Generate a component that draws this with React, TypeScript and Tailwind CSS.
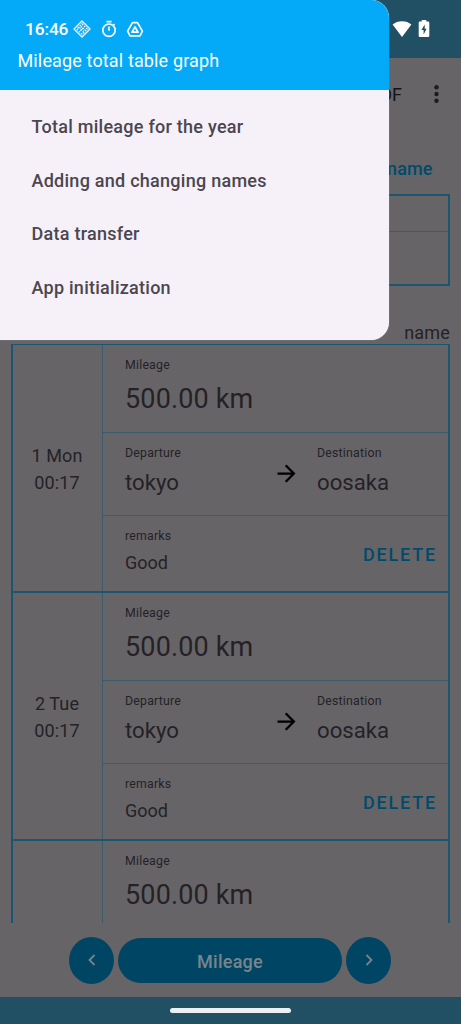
const menuItems = [
  "Total mileage for the year",
  "Adding and changing names",
  "Data transfer",
  "App initialization",
]

type MileageRecord = {
  id: number
  day?: string
  time?: string
  km: string
  trip?: { from: string; to: string; remarks: string }
}

const records: MileageRecord[] = [
  { id: 1, day: "1 Mon", time: "00:17", km: "500.00 km", trip: { from: "tokyo", to: "oosaka", remarks: "Good" } },
  { id: 2, day: "2 Tue", time: "00:17", km: "500.00 km", trip: { from: "tokyo", to: "oosaka", remarks: "Good" } },
  { id: 3, km: "500.00 km" },
]

function ArrowIcon() {
  return (
    <svg viewBox="0 0 24 24" className="size-[27px]" fill="#000">
      <path d="M12 4l-1.41 1.41L16.17 11H4v2h12.17l-5.58 5.59L12 20l8-8z" />
    </svg>
  )
}

function Field({ label, children }: { label: string; children: React.ReactNode }) {
  return (
    <div className="flex flex-col">
      <span className="text-[12.3px] leading-4 tracking-[0.22px]">{label}</span>
      {children}
    </div>
  )
}

function TripRows({ trip }: { trip: NonNullable<MileageRecord["trip"]> }) {
  return (
    <>
      <div className="flex h-[83px] border-b border-[#3a5c6b] pt-[12px] pl-[22px]">
        <div className="w-[148px]">
          <Field label="Departure">
            <span className="mt-[7px] text-[22.2px] leading-7">{trip.from}</span>
          </Field>
        </div>
        <div className="w-[44px] pt-[15px]">
          <ArrowIcon />
        </div>
        <Field label="Destination">
          <span className="mt-[7px] text-[22.2px] leading-7">{trip.to}</span>
        </Field>
      </div>
      <div className="flex h-[75px] justify-between pt-[12px] pr-[11px] pl-[22px]">
        <Field label="remarks">
          <span className="mt-[7px] text-[18px] leading-6">{trip.remarks}</span>
        </Field>
        <button className="h-[52px] text-[18px] font-medium tracking-[1.8px] text-[#004b6b]">DELETE</button>
      </div>
    </>
  )
}

function RecordCard({ record }: { record: MileageRecord }) {
  return (
    <div className="flex shrink-0 border-b-2 border-[#1c5570] text-[#242226]">
      <div className="flex w-[90px] flex-col items-center justify-center border-r border-[#3a5c6b] pt-px pr-px text-[18px] leading-[27px] tracking-[0.1px]">
        <span>{record.day}</span>
        <span>{record.time}</span>
      </div>
      <div className="flex flex-1 flex-col">
        <div className="h-[88px] border-b border-[#3a5c6b] pt-[12px] pl-[22px]">
          <Field label="Mileage">
            <span className="mt-[10px] text-[27px] leading-8 tracking-[0.15px]">{record.km}</span>
          </Field>
        </div>
        {record.trip && <TripRows trip={record.trip} />}
      </div>
    </div>
  )
}

function PatternIcon() {
  return (
    <svg viewBox="0 0 18 18" className="size-[18px]" fill="none" stroke="#fff">
      <path d="M9 1l8 8-8 8-8-8z" strokeWidth="1.2" strokeLinejoin="round" />
      <path d="M9 3.8l5.2 5.2L9 14.2 3.8 9z" strokeWidth="1.3" strokeDasharray="1.7 1.2" />
      <path d="M6.4 7.4l4.2 4.2M7.4 10.6l3.4-3.4M8 6.2l3.8 3.8" strokeWidth="1.2" strokeDasharray="1.5 .9" />
    </svg>
  )
}

function TimerIcon() {
  return (
    <svg viewBox="0 0 18 18" className="size-[18px]" fill="none" stroke="#fff" strokeWidth="1.6">
      <circle cx="9" cy="10.2" r="6.2" />
      <path d="M6.5 1.6h5M9 6.4v4.4M13.3 5.4l1.3-1.3" />
    </svg>
  )
}

function TriangleIcon() {
  return (
    <svg viewBox="0 0 18 18" className="size-[18px]" fill="none" stroke="#fff" strokeLinejoin="round">
      <path d="M6.5 2.6h5l4.9 8.5-2.4 4.7H4l-2.4-4.7z" strokeWidth="1.7" />
      <path d="M9 7l3 5.2H6z" strokeWidth="1.7" />
    </svg>
  )
}

function StatusIcons() {
  return (
    <div className="absolute top-[19px] right-[31px] flex items-center gap-[6px]">
      <svg viewBox="0 0 20 17" className="h-[17px] w-5" fill="#fff">
        <path d="M10 17L.6 4.5C3.1 2.4 6.3 1.2 10 1.2s6.9 1.2 9.4 3.3z" />
      </svg>
      <svg viewBox="0 0 12 19" className="h-[19px] w-3" fill="#fff">
        <path d="M3.7 1h4.6v1.6H10c.8 0 1.3.5 1.3 1.3v12.8c0 .8-.5 1.3-1.3 1.3H2c-.8 0-1.3-.5-1.3-1.3V3.9c0-.8.5-1.3 1.3-1.3h1.7z" />
        <path d="M6.7 5.4L3.4 11h2.2v4.4l3-5.6H6.7z" fill="#214f63" />
      </svg>
    </div>
  )
}

function Drawer() {
  return (
    <aside className="absolute top-0 left-0 h-[340px] w-[389px] overflow-hidden rounded-r-[18px] bg-[#f6f1f9] shadow-[0_0_1px_#c8c4ca]">
      <div className="h-[89.5px] bg-[#04a9f7] pt-[19px] text-white">
        <div className="flex h-5 items-center pl-[25px]">
          <span className="w-12 pt-px text-[17.3px] font-medium tracking-[-0.1px]">16:46</span>
          <div className="flex gap-[8.5px]">
            <PatternIcon />
            <TimerIcon />
            <TriangleIcon />
          </div>
        </div>
        <h1 className="mt-[9.5px] pl-[17.5px] text-[18px] leading-6 tracking-[0.14px]">Mileage total table graph</h1>
      </div>
      <nav className="flex flex-col pt-[10px] pl-[31.5px]">
        {menuItems.map((item) => (
          <a key={item} className="flex h-[53.7px] items-center text-[18px] font-medium tracking-[0.26px] text-[#4b464f]">
            {item}
          </a>
        ))}
      </nav>
    </aside>
  )
}

export default function App() {
  return (
    <div className="relative flex h-[1024px] w-[461px] flex-col overflow-hidden bg-[#676467] font-['Roboto',sans-serif]">
      <div className="h-[58px] shrink-0 bg-[#214f63]" />
      <header className="flex h-[72px] shrink-0 items-center justify-end gap-[32px] pr-[22px] text-[18px] text-[#151316]">
        <span>PDF</span>
        <svg viewBox="0 0 5 18" className="h-[18px] w-[5px]" fill="#1d1b1e">
          <circle cx="2.5" cy="2.3" r="2.2" />
          <circle cx="2.5" cy="9" r="2.2" />
          <circle cx="2.5" cy="15.7" r="2.2" />
        </svg>
      </header>

      <div className="flex h-[64px] shrink-0 items-center justify-end pt-3 pr-[28.5px] text-[18px] font-medium tracking-[0.1px] text-[#004b6b]">
        name
      </div>
      <div className="mr-[11px] ml-[11px] flex h-[92px] shrink-0 flex-col border-2 border-[#1c5570]">
        <div className="h-[36px] border-b border-[#3a5c6b]" />
      </div>
      <div className="flex h-[58px] shrink-0 items-end justify-end pr-[11px] text-[18px] leading-[22px] tracking-[0.2px] text-[#242226]">
        name
      </div>

      <main className="mr-[11px] ml-[11px] flex h-[579px] shrink-0 flex-col overflow-hidden border-x-2 border-t border-[#1c5570]">
        {records.map((record) => (
          <RecordCard key={record.id} record={record} />
        ))}
      </main>

      <footer className="flex h-[74px] shrink-0 items-center justify-center gap-1 pr-px text-[#77858c]">
        <button className="flex h-[47px] w-[45px] items-center justify-center rounded-[50%] bg-[#004564]">
          <svg viewBox="0 0 12 14" className="h-3.5 w-3" fill="none" stroke="currentColor" strokeWidth="1.8">
            <path d="M8.5 2L3.5 7l5 5" />
          </svg>
        </button>
        <button className="h-[45px] w-[224px] rounded-full bg-[#004564] pt-0.5 text-[18px] font-medium tracking-[0.26px]">
          Mileage
        </button>
        <button className="flex h-[47px] w-[45px] items-center justify-center rounded-[50%] bg-[#004564]">
          <svg viewBox="0 0 12 14" className="h-3.5 w-3" fill="none" stroke="currentColor" strokeWidth="1.8">
            <path d="M3.5 2l5 5-5 5" />
          </svg>
        </button>
      </footer>
      <div className="flex h-[27px] shrink-0 justify-center bg-[#214f63] pt-[11px]">
        <div className="h-[5px] w-[121px] rounded-full bg-[#ecf0f2]" />
      </div>

      <StatusIcons />
      <Drawer />
    </div>
  )
}
